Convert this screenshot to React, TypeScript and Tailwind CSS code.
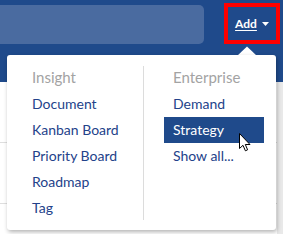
import { useState } from 'react';

const insightItems = ['Document', 'Kanban Board', 'Priority Board', 'Roadmap', 'Tag'];
const enterpriseItems = ['Demand', 'Strategy', 'Show all...'];

const Cursor = () => (
  <svg className="absolute left-[239px] top-[133px]" width="13" height="19" viewBox="0 0 13 19">
    <path
      d="M0.5 0.5 L0.5 15.5 L4 12.3 L6.4 17.8 L8.6 16.8 L6.3 11.5 L11 11.5 Z"
      fill="#fff"
      stroke="#000"
      strokeWidth="1"
      strokeLinejoin="round"
    />
  </svg>
);

const MenuColumn = ({ title, items, active }: { title: string; items: string[]; active?: string }) => (
  <div className="flex w-[100px] flex-col">
    <div className="h-[28px] px-[9px] text-[15px] leading-[28px] text-[#a3a3a3]">{title}</div>
    {items.map((item) => (
      <div
        key={item}
        className={
          item === active
            ? 'h-[26px] whitespace-nowrap bg-[#1f4a8b] px-[9px] text-[14px] leading-[26px] text-white'
            : 'h-[26px] whitespace-nowrap px-[9px] text-[14px] leading-[26px] text-[#23428a]'
        }
      >
        {item}
      </div>
    ))}
  </div>
);

export default function App() {
  const [open] = useState(true);

  return (
    <div className="relative h-[234px] w-[283px] overflow-hidden bg-white font-['Lato','Liberation_Sans',sans-serif]">
      <header className="flex h-[82px] items-start bg-[#1f4a8b] pt-[5px]">
        <div className="h-[39px] w-[204px] rounded-r-[5px] bg-[#4a6ba0]" />
        <div className="ml-[20px] mt-[-2px] flex h-[41px] w-[56px] items-center justify-center gap-[5px] border-4 border-[#ff0000]">
          <span className="text-[12px] font-bold text-white underline underline-offset-2">Add</span>
          <svg width="7" height="4" viewBox="0 0 7 4">
            <path d="M0 0 L7 0 L3.5 4 Z" fill="#fff" />
          </svg>
        </div>
      </header>

      <div className="flex flex-col">
        <div className="h-[61px] border-b border-[#dedede]" />
        <div className="h-[61px] border-b border-[#dedede]" />
      </div>
      <div className="absolute right-0 top-[82px] h-[152px] w-[6px] bg-[#e9e9e9]" />

      {open && (
        <>
          <svg className="absolute left-[237px] top-[46px]" width="20" height="10" viewBox="0 0 20 10">
            <path d="M0 10 L10 0.5 L20 10 Z" fill="#fff" />
          </svg>
          <div className="absolute left-[7px] top-[55px] flex h-[175px] w-[269px] rounded-[3px] bg-white pb-[9px] pl-[16px] pr-[12px] pt-[8px] shadow-[1px_2px_4px_rgba(0,0,0,0.3)]">
            <MenuColumn title="Insight" items={insightItems} />
            <div className="mx-[20px] mb-[1px] mt-[3px] w-px bg-[#dcdcdc]" />
            <MenuColumn title="Enterprise" items={enterpriseItems} active="Strategy" />
          </div>
          <Cursor />
        </>
      )}
    </div>
  );
}
